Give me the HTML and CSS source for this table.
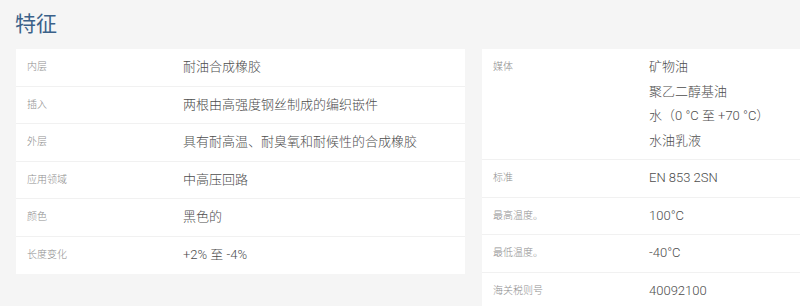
FILE: index.html
```html
<!DOCTYPE html>
<html lang="zh">
<head>
<meta charset="utf-8">
<link rel="stylesheet" href="styles.css">
</head>
<body>
<div class="page">
  <h1 class="title">特征</h1>
  <div class="cards">
    <div class="card">
      <div class="row"><div class="label">内层</div><div class="value">耐油合成橡胶</div></div>
      <div class="row"><div class="label">插入</div><div class="value">两根由高强度钢丝制成的编织嵌件</div></div>
      <div class="row"><div class="label">外层</div><div class="value">具有耐高温、耐臭氧和耐候性的合成橡胶</div></div>
      <div class="row"><div class="label">应用领域</div><div class="value">中高压回路</div></div>
      <div class="row"><div class="label">颜色</div><div class="value">黑色的</div></div>
      <div class="row last"><div class="label">长度变化</div><div class="value">+2% 至 -4%</div></div>
    </div>
    <div class="card">
      <div class="row"><div class="label">媒体</div><div class="value"><div>矿物油</div><div>聚乙二醇基油</div><div>水（0 °C 至 +70 °C）</div><div>水油乳液</div></div></div>
      <div class="row"><div class="label">标准</div><div class="value">EN 853 2SN</div></div>
      <div class="row"><div class="label">最高温度。</div><div class="value">100°C</div></div>
      <div class="row"><div class="label">最低温度。</div><div class="value">-40°C</div></div>
      <div class="row last"><div class="label">海关税则号</div><div class="value">40092100</div></div>
    </div>
  </div>
</div>
</body>
</html>
```
FILE: styles.css
```css
html, body {
  margin: 0;
  padding: 0;
  background: #f5f5f5;
  overflow: hidden;
}
body {
  font-family: Roboto, "Noto Sans CJK SC", sans-serif;
}
.page {
  padding: 10px 0 0 16px;
}
.title {
  margin: 0 0 11px -1px;
  font-size: 21px;
  line-height: 28px;
  font-weight: 400;
  color: #3b6189;
}
.cards {
  display: grid;
  grid-template-columns: 449px 449px;
  gap: 17px;
  align-items: start;
}
.card {
  background: #fff;
}
.row {
  display: grid;
  grid-template-columns: 156px 1fr;
  padding: 6px 11px;
  border-bottom: 1px solid #f1f1f1;
  line-height: 24.5px;
}
.row.last {
  border-bottom: none;
  padding-bottom: 7px;
}
.label {
  font-size: 10px;
  font-weight: 300;
  color: #8e8e8e;
}
.value {
  font-size: 13px;
  font-weight: 300;
  color: #4d4d4d;
}
```
